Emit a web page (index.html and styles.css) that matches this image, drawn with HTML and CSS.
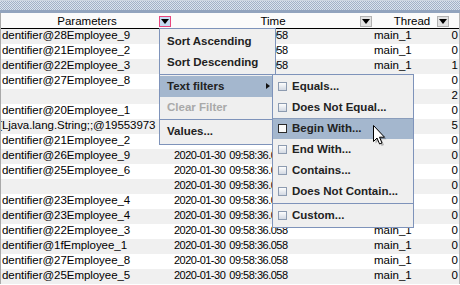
FILE: index.html
```html
<!DOCTYPE html>
<html>
<head>
<meta charset="utf-8">
<link rel="stylesheet" href="styles.css">
</head>
<body>
<div class="app">
  <div class="topband"></div>
  <div class="table">
    <div class="thead">
      <div class="th c-param">Parameters<span class="sort active"></span></div>
      <div class="th c-time">Time<span class="sort"></span></div>
      <div class="th c-thread">Thread<span class="sort"></span></div>
      <div class="th c-num"></div>
    </div>
    <div class="tbody">
      <div class="tr"><div class="td c-param">dentifier@28Employee_9</div><div class="td c-time">2020-01-30 09:58:36.058</div><div class="td c-thread">main_1</div><div class="td c-num">0</div></div>
      <div class="tr"><div class="td c-param">dentifier@21Employee_2</div><div class="td c-time">2020-01-30 09:58:36.058</div><div class="td c-thread">main_1</div><div class="td c-num">0</div></div>
      <div class="tr"><div class="td c-param">dentifier@22Employee_3</div><div class="td c-time">2020-01-30 09:58:36.058</div><div class="td c-thread">main_1</div><div class="td c-num">1</div></div>
      <div class="tr"><div class="td c-param">dentifier@27Employee_8</div><div class="td c-time">2020-01-30 09:58:36.058</div><div class="td c-thread">main_1</div><div class="td c-num">0</div></div>
      <div class="tr"><div class="td c-param"></div><div class="td c-time">2020-01-30 09:58:36.058</div><div class="td c-thread">main_1</div><div class="td c-num">2</div></div>
      <div class="tr"><div class="td c-param">dentifier@20Employee_1</div><div class="td c-time">2020-01-30 09:58:36.058</div><div class="td c-thread">main_1</div><div class="td c-num">0</div></div>
      <div class="tr"><div class="td c-param cut">[Ljava.lang.String;;@19553973</div><div class="td c-time">2020-01-30 09:58:36.058</div><div class="td c-thread">main_1</div><div class="td c-num">5</div></div>
      <div class="tr"><div class="td c-param">dentifier@21Employee_2</div><div class="td c-time">2020-01-30 09:58:36.058</div><div class="td c-thread">main_1</div><div class="td c-num">0</div></div>
      <div class="tr"><div class="td c-param">dentifier@26Employee_9</div><div class="td c-time">2020-01-30 09:58:36.058</div><div class="td c-thread">main_1</div><div class="td c-num">0</div></div>
      <div class="tr"><div class="td c-param">dentifier@25Employee_6</div><div class="td c-time">2020-01-30 09:58:36.058</div><div class="td c-thread">main_1</div><div class="td c-num">0</div></div>
      <div class="tr"><div class="td c-param"></div><div class="td c-time">2020-01-30 09:58:36.058</div><div class="td c-thread">main_1</div><div class="td c-num">0</div></div>
      <div class="tr"><div class="td c-param">dentifier@23Employee_4</div><div class="td c-time">2020-01-30 09:58:36.058</div><div class="td c-thread">main_1</div><div class="td c-num">0</div></div>
      <div class="tr"><div class="td c-param">dentifier@23Employee_4</div><div class="td c-time">2020-01-30 09:58:36.058</div><div class="td c-thread">main_1</div><div class="td c-num">0</div></div>
      <div class="tr"><div class="td c-param">dentifier@22Employee_3</div><div class="td c-time">2020-01-30 09:58:36.058</div><div class="td c-thread">main_1</div><div class="td c-num">0</div></div>
      <div class="tr"><div class="td c-param">dentifier@1fEmployee_1</div><div class="td c-time">2020-01-30 09:58:36.058</div><div class="td c-thread">main_1</div><div class="td c-num">0</div></div>
      <div class="tr"><div class="td c-param">dentifier@27Employee_8</div><div class="td c-time">2020-01-30 09:58:36.058</div><div class="td c-thread">main_1</div><div class="td c-num">0</div></div>
      <div class="tr"><div class="td c-param">dentifier@25Employee_5</div><div class="td c-time">2020-01-30 09:58:36.058</div><div class="td c-thread">main_1</div><div class="td c-num">0</div></div>
    </div>
  </div>

  <div class="menu main-menu">
    <div class="mi">Sort Ascending</div>
    <div class="mi">Sort Descending</div>
    <div class="sep"></div>
    <div class="mi hl has-sub">Text filters</div>
    <div class="mi dis">Clear Filter</div>
    <div class="sep"></div>
    <div class="mi">Values...</div>
  </div>

  <div class="menu sub-menu">
    <div class="mi"><span class="cb"></span>Equals...</div>
    <div class="mi"><span class="cb"></span>Does Not Equal...</div>
    <div class="mi hl"><span class="cb"></span>Begin With...</div>
    <div class="mi"><span class="cb"></span>End With...</div>
    <div class="mi"><span class="cb"></span>Contains...</div>
    <div class="mi"><span class="cb"></span>Does Not Contain...</div>
    <div class="sep"></div>
    <div class="mi"><span class="cb"></span>Custom...</div>
  </div>

  <svg class="cursor" width="15" height="23" viewBox="0 0 15 23">
    <path d="M2.5 2.5 V18.5 L6 15 L8.6 21 L11 20 L8.5 14.2 H13.5 Z" fill="#000" opacity="0.25"/>
    <path d="M0.5 0.5 V16.5 L4 13 L6.6 19 L9 18 L6.5 12.2 H11.5 Z" fill="#fff" stroke="#000" stroke-width="1" stroke-linejoin="miter"/>
  </svg>
</div>
</body>
</html>
```

FILE: styles.css
```css
* { box-sizing: border-box; }
html, body { margin: 0; padding: 0; }
body {
  width: 460px;
  height: 285px;
  overflow: hidden;
  background: #ffffff;
  font-family: "Liberation Sans", Arial, sans-serif;
  font-size: 11.5px;
  color: #000;
}
.app {
  position: relative;
  width: 460px;
  height: 285px;
  overflow: hidden;
}
.topband {
  height: 13px;
  border-top: 1px solid #ccd5e1;
  border-bottom: 3px solid #92a4be;
  background: repeating-conic-gradient(#a0b1c8 0 25%, #dbe2ec 0 50%) 0 0 / 2px 2px;
}
.table {
  border-left: 1px solid #a9a9a9;
  border-right: 1px solid #b8b8b8;
}
.thead {
  display: flex;
  height: 16px;
  border-bottom: 1px solid #000;
  background: #fbfbfb;
}
.th {
  position: relative;
  height: 15px;
  padding-top: 1px;
  line-height: 14px;
  text-align: center;
  white-space: nowrap;
}
.sort {
  position: absolute;
  right: 1px;
  top: 3px;
  width: 12px;
  height: 11px;
  border: 1px solid #b2b2b2;
  background: #e2e2e2;
}
.c-time .sort { right: 0; }
.sort::after {
  content: "";
  position: absolute;
  left: 1px;
  top: 2px;
  border-left: 4px solid transparent;
  border-right: 4px solid transparent;
  border-top: 5px solid #000;
}
.sort.active {
  border-color: #e8457d;
  background: #c6dbf2;
}
.tr {
  display: flex;
  height: 15px;
}
.tr:nth-child(odd) { background: #f0f0f0; }
.tr:nth-child(even) { background: #ffffff; }
.td {
  height: 15px;
  line-height: 13px;
  white-space: nowrap;
  overflow: hidden;
}
.c-param { width: 171px; padding-left: 1px; }
.td.c-param { letter-spacing: -0.05px; }
.c-time { width: 200px; padding-left: 2px; }
.td.c-time { font-size: 11px; letter-spacing: -0.5px; word-spacing: 1.5px; }
.c-thread { width: 78px; padding-left: 2px; }
.c-num { width: 9px; padding-right: 1px; text-align: right; }
.cut { text-indent: -3.2px; }

.menu {
  position: absolute;
  background: #efefef;
  border: 1px solid #7e93ba;
  font-weight: bold;
  color: #222;
}
.main-menu {
  left: 159px;
  top: 28px;
  width: 117px;
  padding: 2px 0;
}
.sub-menu {
  left: 272px;
  top: 74px;
  width: 142px;
  padding: 1px 0;
}
.mi {
  position: relative;
  display: flex;
  align-items: center;
  height: 21px;
  line-height: 21px;
  padding-left: 7px;
  white-space: nowrap;
}
.sub-menu .mi { padding-left: 5px; }
.mi.hl { background: #a4b7ce; }
.sub-menu .mi.hl { box-shadow: inset 0 1px 0 #8a9dbb; }
.mi.dis { color: #a9a9a9; }
.has-sub::after {
  content: "";
  position: absolute;
  right: 5px;
  top: 7px;
  border-top: 3.5px solid transparent;
  border-bottom: 3.5px solid transparent;
  border-left: 4px solid #111;
}
.sep {
  height: 1px;
  margin: 1px 0;
  background: #7e93ba;
}
.cb {
  width: 9px;
  height: 9px;
  margin-right: 5px;
  border: 1px solid #8d9bb0;
  background: linear-gradient(#fdfdfd, #d3d9e3);
}
.mi.hl .cb {
  border-color: #2a2a2a;
  background: #fafafa;
}
.cursor {
  position: absolute;
  left: 373px;
  top: 125px;
}
```
